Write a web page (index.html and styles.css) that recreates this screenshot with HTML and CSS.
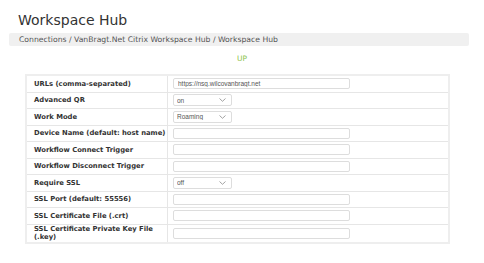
FILE: index.html
```html
<!DOCTYPE html>
<html lang="en">

<head>
    <meta charset="UTF-8">
    <meta name="viewport" content="width=device-width, initial-scale=1.0">
    <title>Workspace Hub</title>
    <link rel="stylesheet" href="styles.css">
</head>

<body>
    <h1 class="title">Workspace Hub</h1>
    <div class="crumbs">Connections / VanBragt.Net Citrix Workspace Hub / Workspace Hub</div>
    <div class="status">UP</div>

    <table class="settings">
        <tr>
            <td class="label">URLs (comma-separated)</td>
            <td><input class="text" type="text" value="https://nsg.wilcovanbragt.net"></td>
        </tr>
        <tr>
            <td class="label">Advanced QR</td>
            <td>
                <span class="pick">
                    <select><option>on</option><option>off</option></select>
                    <svg class="arrow" width="7" height="4" viewBox="0 0 7 4"><path d="M0.5 0.5 L3.5 3.3 L6.5 0.5" fill="none" stroke="#999" stroke-width="0.9"/></svg>
                </span>
            </td>
        </tr>
        <tr>
            <td class="label">Work Mode</td>
            <td>
                <span class="pick">
                    <select><option>Roaming</option><option>Fixed</option></select>
                    <svg class="arrow" width="7" height="4" viewBox="0 0 7 4"><path d="M0.5 0.5 L3.5 3.3 L6.5 0.5" fill="none" stroke="#999" stroke-width="0.9"/></svg>
                </span>
            </td>
        </tr>
        <tr>
            <td class="label">Device Name (default: host name)</td>
            <td><input class="text" type="text"></td>
        </tr>
        <tr>
            <td class="label">Workflow Connect Trigger</td>
            <td><input class="text" type="text"></td>
        </tr>
        <tr>
            <td class="label">Workflow Disconnect Trigger</td>
            <td><input class="text" type="text"></td>
        </tr>
        <tr>
            <td class="label">Require SSL</td>
            <td>
                <span class="pick">
                    <select><option>off</option><option>on</option></select>
                    <svg class="arrow" width="7" height="4" viewBox="0 0 7 4"><path d="M0.5 0.5 L3.5 3.3 L6.5 0.5" fill="none" stroke="#999" stroke-width="0.9"/></svg>
                </span>
            </td>
        </tr>
        <tr>
            <td class="label">SSL Port (default: 55556)</td>
            <td><input class="text" type="text"></td>
        </tr>
        <tr>
            <td class="label">SSL Certificate File (.crt)</td>
            <td><input class="text" type="text"></td>
        </tr>
        <tr>
            <td class="label two">SSL Certificate Private Key File (.key)</td>
            <td><input class="text" type="text"></td>
        </tr>
    </table>
</body>

</html>
```

FILE: styles.css
```css
body {
    margin: 0;
    background: #fff;
    font-family: "DejaVu Sans", Verdana, sans-serif;
    color: #444;
}

.title {
    margin: 0;
    padding: 10px 0 0 18px;
    font-size: 14px;
    line-height: 20px;
    font-weight: normal;
    color: #333;
}

.crumbs {
    margin: 3px 0 0 9px;
    width: 450px;
    height: 13px;
    padding-left: 10px;
    background: #f0f0f0;
    border-radius: 2px;
    font-size: 7.7px;
    line-height: 13px;
    color: #555;
}

.status {
    margin-top: 8px;
    text-align: center;
    font-size: 7.5px;
    line-height: 10px;
    color: #8bc34a;
}

.settings {
    margin: 10px 0 0 25px;
    width: 425px;
    table-layout: fixed;
    border-collapse: collapse;
    border: 2px solid #eee;
}

.settings td {
    height: 15.5px;
    padding: 0 5px;
    border: 1px solid #e6e6e6;
    vertical-align: middle;
}

.settings td.label {
    width: 128px;
    padding-left: 7px;
    font-size: 6.8px;
    font-weight: bold;
    color: #333;
    line-height: 8px;
    white-space: nowrap;
}

.settings td.two {
    height: 17px;
    white-space: normal;
}

.text {
    display: block;
    box-sizing: border-box;
    width: 177px;
    height: 11px;
    margin: 0;
    padding: 0 4px;
    border: 1px solid #ddd;
    border-radius: 2px;
    font-family: "Liberation Sans", Arial, sans-serif;
    font-size: 6.5px;
    color: #555;
    outline: none;
}

.pick {
    position: relative;
    display: block;
    width: 59px;
    height: 12px;
}

.pick select {
    display: block;
    -webkit-appearance: none;
    appearance: none;
    box-sizing: border-box;
    width: 59px;
    height: 12px;
    margin: 0;
    padding: 0 0 0 3px;
    border: 1px solid #ddd;
    border-radius: 2px;
    background: #fff;
    font-family: "Liberation Sans", Arial, sans-serif;
    font-size: 6.5px;
    color: #555;
}

.pick .arrow {
    position: absolute;
    right: 6px;
    top: 4px;
}
```
